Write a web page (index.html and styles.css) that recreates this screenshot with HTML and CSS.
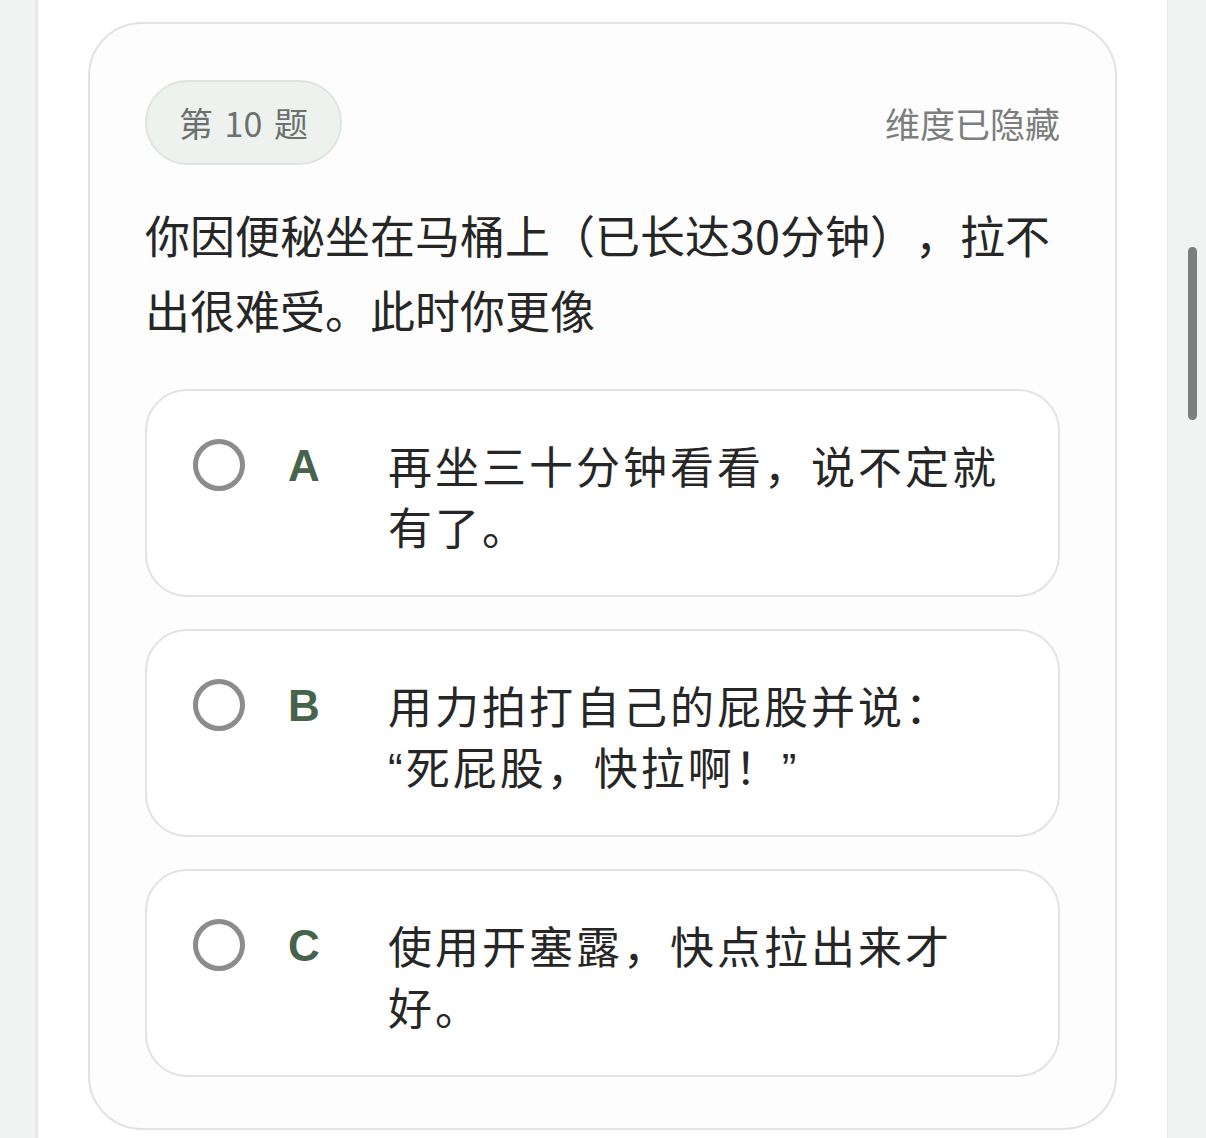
FILE: index.html
```html
<!DOCTYPE html>
<html lang="zh-CN">
<head>
<meta charset="utf-8">
<title>第 10 题</title>
<link rel="stylesheet" href="styles.css">
</head>
<body>
<div class="page">
  <div class="rail rail-left"></div>
  <main class="main">
    <section class="card">
      <header class="card-head">
        <span class="badge">第 10 题</span>
        <span class="hidden-tag">维度已隐藏</span>
      </header>
      <p class="question">你因便秘坐在马桶上（已长达30分钟），拉不出很难受。此时你更像</p>
      <div class="options">
        <div class="option">
          <span class="radio"></span>
          <span class="letter">A</span>
          <span class="opt-text">再坐三十分钟看看，说不定就有了。</span>
        </div>
        <div class="option">
          <span class="radio"></span>
          <span class="letter">B</span>
          <span class="opt-text">用力拍打自己的屁股并说：<span class="quote">“</span>死屁股，快拉啊！<span class="quote">”</span></span>
        </div>
        <div class="option">
          <span class="radio"></span>
          <span class="letter">C</span>
          <span class="opt-text">使用开塞露，快点拉出来才好。</span>
        </div>
      </div>
    </section>
  </main>
  <div class="rail rail-right">
    <div class="scroll-thumb"></div>
  </div>
</div>
</body>
</html>
```

FILE: styles.css
```css
html, body {
  margin: 0;
  padding: 0;
  height: 1138px;
  overflow: hidden;
  background: #ffffff;
}

body {
  font-family: "Noto Sans CJK SC", "Noto Sans", sans-serif;
  color: #262626;
}

.page {
  display: flex;
  height: 1138px;
}

.rail {
  background: #f0f3f1;
  flex: none;
}

.rail-left {
  width: 35px;
  border-right: 3px solid #e6e9e7;
}

.rail-right {
  width: 38px;
  border-left: 1px solid #e6e9e7;
  position: relative;
}

.scroll-thumb {
  position: absolute;
  top: 247px;
  left: 20px;
  width: 9px;
  height: 173px;
  border-radius: 5px;
  background: #7b7f7d;
}

.main {
  flex: 1;
  padding: 22px 50px 0 50px;
}

.card {
  border: 2px solid #e1e3e1;
  border-radius: 54px;
  background: #fcfdfc;
  padding: 56px 55px 51px 55px;
}

.card-head {
  display: flex;
  justify-content: space-between;
  align-items: center;
}

.badge {
  display: inline-block;
  height: 81px;
  line-height: 81px;
  padding: 0 32px;
  border: 2px solid #dfe4e0;
  border-radius: 43px;
  background: #eef2ef;
  color: #6d716e;
  font-size: 34px;
  word-spacing: 4px;
}

.hidden-tag {
  font-size: 35px;
  color: #7b7e7c;
}

.question {
  margin: 32px 0 0 0;
  font-size: 45px;
  line-height: 75px;
  color: #262626;
  text-spacing-trim: space-all;
}

.options {
  margin-top: 42px;
  display: flex;
  flex-direction: column;
  gap: 32px;
}

.option {
  display: flex;
  align-items: flex-start;
  border: 2px solid #e2e4e2;
  border-radius: 42px;
  background: #ffffff;
  padding: 44px 42px 38px 46px;
}

.radio {
  flex: none;
  box-sizing: border-box;
  width: 52px;
  height: 52px;
  margin-top: 4px;
  border: 5px solid #8c8c8c;
  border-radius: 50%;
}

.letter {
  flex: none;
  width: 100px;
  margin-left: 43px;
  font-family: "Liberation Sans", Arial, sans-serif;
  font-weight: 700;
  font-size: 44px;
  line-height: 61px;
  color: #47634b;
}

.opt-text {
  flex: 1;
  font-size: 44px;
  letter-spacing: 3px;
  line-height: 61px;
  color: #262626;
  text-spacing-trim: space-all;
}

.quote {
  font-family: "Liberation Sans", Arial, sans-serif;
  line-height: 0;
}
```
